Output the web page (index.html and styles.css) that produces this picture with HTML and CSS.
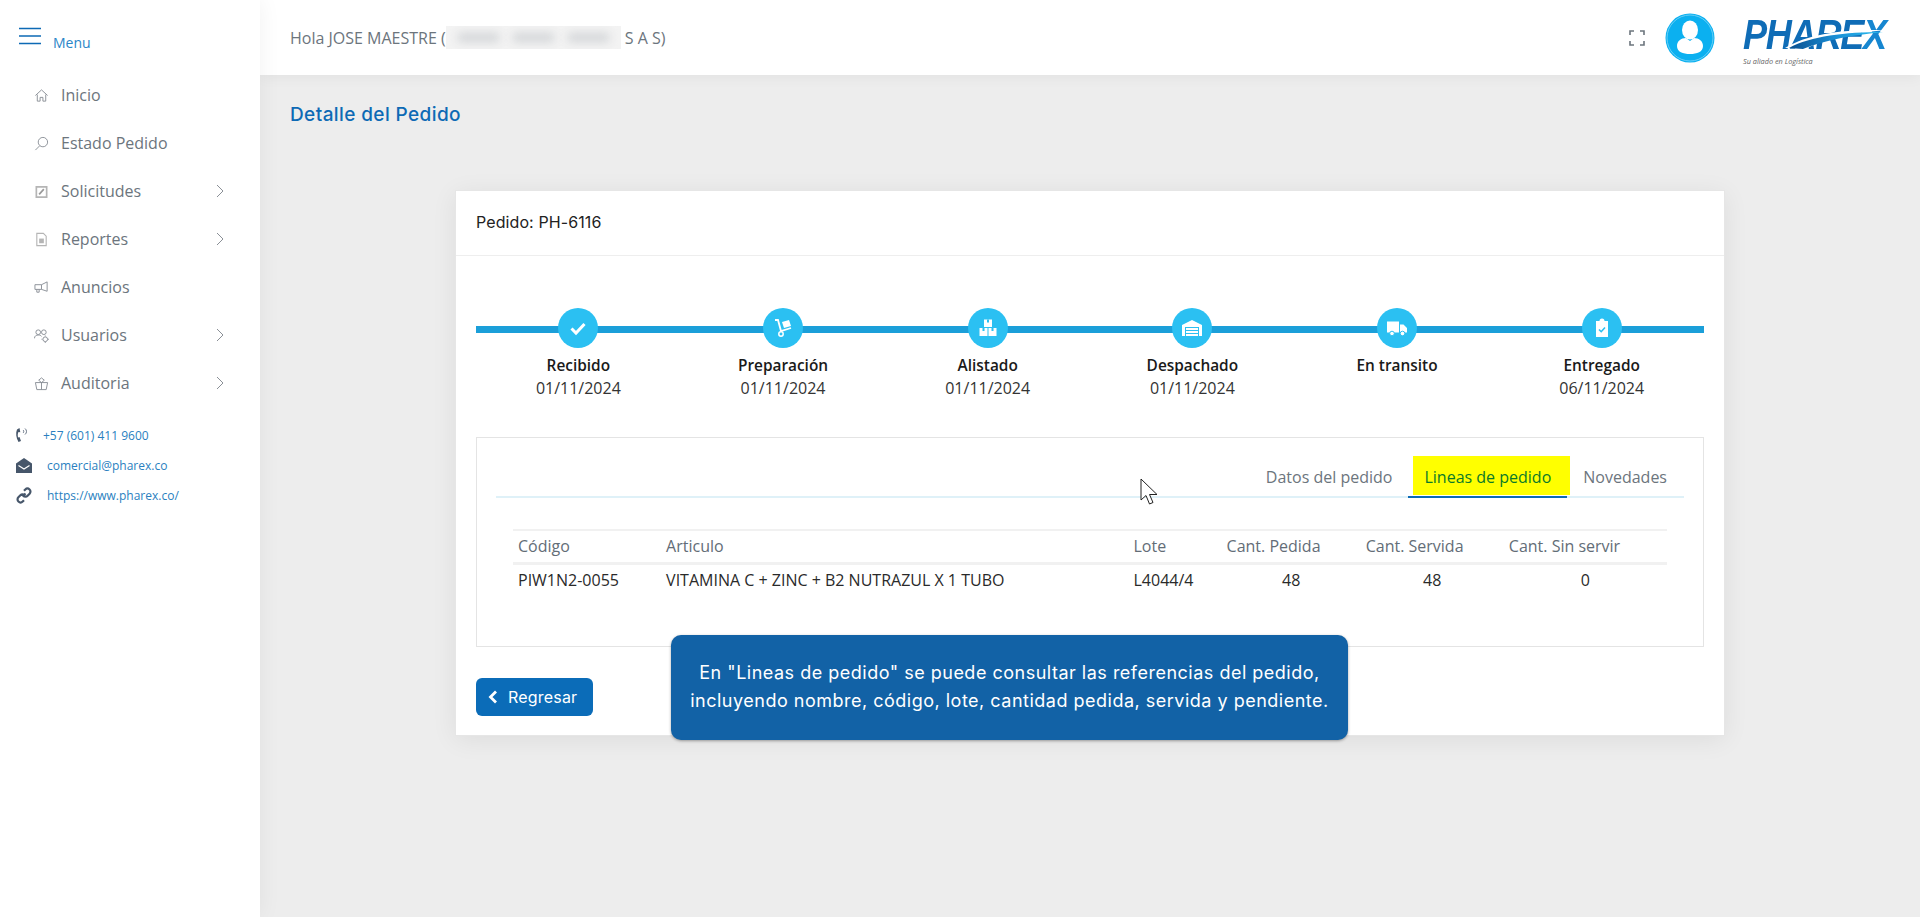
FILE: index.html
```html
<!DOCTYPE html>
<html>
<head>
  <meta charset="UTF-8">
  <title>Detalle del Pedido</title>
  <link rel="stylesheet" href="styles.css">
</head>
<body>
  <aside class="sidebar">
    <div class="menu-head">
      <svg class="burger" width="24" height="18" viewBox="0 0 24 18"><path d="M1 1.500h22M1 9h22M1 16.500h22" stroke="#0d6ab5" stroke-width="1.600" fill="none"/></svg>
      <span class="menu-label">Menu</span>
    </div>
    <nav class="nav">
      <a class="nav-item"><svg class="nav-icon" viewBox="0 0 16 16"><path d="M1.500 8 8 2l6.500 6M3.500 7v7h3v-4h3v4h3V7"/></svg><span>Inicio</span></a>
      <a class="nav-item"><svg class="nav-icon" viewBox="0 0 16 16"><circle cx="9.500" cy="6.500" r="5"/><path d="M6 10.500 1.500 15"/></svg><span>Estado Pedido</span></a>
      <a class="nav-item"><svg class="nav-icon" viewBox="0 0 16 16"><path class="soft" d="M2.500 3h11v11h-11z" stroke-width="1.800"/><path class="soft-dark" d="m5.500 11 5-5.500" stroke-width="1.800"/></svg><span>Solicitudes</span><svg class="chev" viewBox="0 0 8 14"><path d="m1 1 6 6-6 6"/></svg></a>
      <a class="nav-item"><svg class="nav-icon" viewBox="0 0 16 16"><path class="soft" d="M3 1.500h7l3 3v10H3z" stroke-width="1.200"/><path d="M5.500 7h5v5h-5z" fill="#b5b5b5" stroke="none"/></svg><span>Reportes</span><svg class="chev" viewBox="0 0 8 14"><path d="m1 1 6 6-6 6"/></svg></a>
      <a class="nav-item"><svg class="nav-icon" viewBox="0 0 16 16"><path d="M1 5h7l6-3v10L8 10H1zM3 10v3h2.500v-3M8 5v5"/></svg><span>Anuncios</span></a>
      <a class="nav-item"><svg class="nav-icon" viewBox="0 0 16 16"><circle cx="4.500" cy="4.500" r="2.500"/><circle cx="10.500" cy="4.500" r="2.500"/><path d="M.5 11c0-2.500 2-3.500 4-3.500s3 .5 3.500 1.500"/><circle cx="12" cy="12" r="2.500"/><path d="M12 8v1M12 15v1M8 12h1M15 12h1"/></svg><span>Usuarios</span><svg class="chev" viewBox="0 0 8 14"><path d="m1 1 6 6-6 6"/></svg></a>
      <a class="nav-item"><svg class="nav-icon" viewBox="0 0 16 16"><path d="M1.500 7h13l-1.500 7.500H3zM8 7v7.500"/><path d="M8 7 5 4.500 8 2l3 2.500z"/></svg><span>Auditoria</span><svg class="chev" viewBox="0 0 8 14"><path d="m1 1 6 6-6 6"/></svg></a>
    </nav>
    <ul class="contact">
      <li class="contact-phone"><svg width="14" height="16" viewBox="0 0 14 16"><path d="M4.500 1 2 2.500C.5 6 1 11 3.500 15l2.500-1-1.500-4-1.500.5C2.500 8 2.800 6 3.500 5l1.800.2z" fill="#46566a"/><path d="M8 3c1 .8 1 2.200 0 3M10 1.500c2 1.500 2 4.500 0 6" stroke="#46566a" stroke-width=".8" fill="none"/></svg><a>+57 (601) 411 9600</a></li>
      <li><svg width="18" height="17" viewBox="0 0 18 17"><path d="M1 6.500 9 1l8 5.500V16H1z" fill="#46566a"/><path d="m3.500 8.500 5.500 3.500 5.500-3.500" stroke="#fff" stroke-width="1.200" fill="none"/></svg><a>comercial@pharex.co</a></li>
      <li><svg width="18" height="17" viewBox="0 0 18 17"><path d="m7.500 9.500 3-3M9 3.800l1.300-1.300a3 3 0 0 1 4.300 4.200l-2 2a3 3 0 0 1-4.300 0M9 13.200l-1.300 1.300a3 3 0 0 1-4.300-4.200l2-2a3 3 0 0 1 4.300 0" stroke="#46566a" stroke-width="2.200" fill="none"/></svg><a>https://www.pharex.co/</a></li>
    </ul>
  </aside>

  <div class="page">
    <header class="topbar">
      <div class="greeting">Hola JOSE MAESTRE (<span class="blurred"><i></i><i></i><i></i></span> S A S)</div>
      <div class="top-right">
        <svg class="fullscreen" width="16" height="16" viewBox="0 0 16 16"><path d="M1 5V1h4M11 1h4v4M15 11v4h-4M5 15H1v-4" stroke="#6c757d" stroke-width="1.600" fill="none"/></svg>
        <svg class="avatar" width="50" height="50" viewBox="0 0 50 50"><circle cx="25" cy="25" r="24.500" fill="#0bb0f0"/><circle cx="25" cy="25" r="23" fill="none" stroke="#7fd6f7" stroke-width=".8"/><ellipse cx="25" cy="17" rx="8" ry="9.500" fill="#fff"/><path d="M12 33c0-5 4-8 9-8l4 3 4-3c5 0 9 3 9 8 0 6-6 8-13 8s-13-2-13-8z" fill="#fff"/></svg>
        <div class="logo">
          <span class="logo-name">PHARE<b>X</b></span>
          <svg class="logo-swoosh" width="146" height="30" viewBox="0 0 146 30">
            <defs><linearGradient id="swoosh" x1="0" x2="1" y1="0" y2="0"><stop offset="0" stop-color="#0a4f8f"/><stop offset=".5" stop-color="#1a8fd6"/><stop offset="1" stop-color="#2cc0f0"/></linearGradient></defs>
            <path d="M42 24C64 10 100 5 143 6 110 9 82 14 62 25z" fill="#fff"/>
            <path d="M46 24C68 12 102 8 140 8 110 11 82 16 60 25z" fill="url(#swoosh)"/>
          </svg>
          <span class="logo-tag">Su aliado en Logística</span>
        </div>
      </div>
    </header>

    <main class="content">
      <h1 class="page-title">Detalle del Pedido</h1>
      <section class="card">
        <div class="card-head">Pedido: PH-6116</div>
        <div class="card-body">
          <div class="steps">
            <div class="step">
              <div class="step-dot"><svg width="20" height="20" viewBox="0 0 20 20"><path d="m3.500 10.500 4.500 4.500 8.500-9" stroke="#fff" stroke-width="3" fill="none"/></svg></div>
              <div class="step-name">Recibido</div>
              <div class="step-date">01/11/2024</div>
            </div>
            <div class="step">
              <div class="step-dot"><svg width="20" height="20" viewBox="0 0 20 20"><path d="M2 2h3l3 11 10-3" stroke="#fff" stroke-width="1.800" fill="none"/><circle cx="8" cy="16" r="2.200" fill="none" stroke="#fff" stroke-width="1.500"/><path d="m9 4 7-2 2 6-7 2z" fill="#fff"/></svg></div>
              <div class="step-name">Preparación</div>
              <div class="step-date">01/11/2024</div>
            </div>
            <div class="step">
              <div class="step-dot"><svg width="20" height="20" viewBox="0 0 20 20"><path d="M6 1.500h8v7.500H6zM1.500 10H9.500v8h-8zM10.500 10h8v8h-8z" fill="#fff"/><path d="M9 1.500h2v3H9zM4.500 10h2v3h-2zM13.500 10h2v3h-2z" fill="#2bc0f2"/></svg></div>
              <div class="step-name">Alistado</div>
              <div class="step-date">01/11/2024</div>
            </div>
            <div class="step">
              <div class="step-dot"><svg width="20" height="20" viewBox="0 0 20 20"><path d="M0 7 10 2l10 5v11h-3V9H3v9H0z" fill="#fff"/><path d="M4 10h12v2H4zM4 13h12v2H4zM4 16h12v2H4z" fill="#fff"/></svg></div>
              <div class="step-name">Despachado</div>
              <div class="step-date">01/11/2024</div>
            </div>
            <div class="step">
              <div class="step-dot"><svg width="20" height="20" viewBox="0 0 20 20"><path d="M0 3.500h12v11H0zM13 6.500h3.500L20 10v4.500h-7z" fill="#fff"/><circle cx="5" cy="15.500" r="2.300" fill="#fff" stroke="#2bc0f2"/><circle cx="15.500" cy="15.500" r="2.300" fill="#fff" stroke="#2bc0f2"/></svg></div>
              <div class="step-name">En transito</div>
              <div class="step-date"></div>
            </div>
            <div class="step">
              <div class="step-dot"><svg width="20" height="20" viewBox="0 0 20 20"><path d="M4 3h3.500a2.500 2.500 0 0 1 5 0H16v16H4z" fill="#fff"/><path d="m7 11.500 2.200 2.200L13 9.500" stroke="#2bc0f2" stroke-width="1.600" fill="none"/></svg></div>
              <div class="step-name">Entregado</div>
              <div class="step-date">06/11/2024</div>
            </div>
          </div>

          <div class="panel">
            <div class="tabs">
              <a class="tab">Datos del pedido</a>
              <a class="tab tab-active"><span>Lineas de pedido</span></a>
              <a class="tab">Novedades</a>
            </div>
            <table class="lines">
              <thead>
                <tr>
                  <th class="col-code">Código</th>
                  <th class="col-name">Articulo</th>
                  <th class="col-lot">Lote</th>
                  <th class="col-a">Cant. Pedida</th>
                  <th class="col-b">Cant. Servida</th>
                  <th class="col-c">Cant. Sin servir</th>
                </tr>
              </thead>
              <tbody>
                <tr>
                  <td>PIW1N2-0055</td>
                  <td>VITAMINA C + ZINC + B2 NUTRAZUL X 1 TUBO</td>
                  <td>L4044/4</td>
                  <td class="num">48</td>
                  <td class="num">48</td>
                  <td class="num num-last">0</td>
                </tr>
              </tbody>
            </table>
          </div>

          <button class="back-btn"><svg width="10" height="14" viewBox="0 0 10 14"><path d="M8 1.500 2.500 7 8 12.500" stroke="#fff" stroke-width="2.800" fill="none"/></svg>Regresar</button>
        </div>
      </section>
    </main>
  </div>

  <svg class="cursor" width="19" height="28" viewBox="0 0 19 28"><path d="M1 1v21l5-4.500 3.500 8.500 3.500-1.500L9.500 16.500H17z" fill="#fff" stroke="#222" stroke-width="1"/></svg>
  <div class="callout">En "Lineas de pedido" se puede consultar las referencias del pedido,<br>incluyendo nombre, código, lote, cantidad pedida, servida y pendiente.</div>
</body>
</html>
```

FILE: styles.css
```css
html, body {
  height: 100%;
}
body {
  margin: 0;
  display: flex;
  height: 917px;
  overflow: hidden;
  background-color: #ededed;
  font-family: 'Open Sans', sans-serif;
  font-size: 16px;
  color: #212529;
}
a {
  text-decoration: none;
}

/* sidebar */
.sidebar {
  position: relative;
  z-index: 2;
  flex: 0 0 260px;
  background-color: #fff;
  box-shadow: 0 0 22px rgba(0, 0, 0, 0.06);
}
.menu-head {
  display: flex;
  padding: 27px 0 0 18px;
  height: 44px;
}
.menu-label {
  margin: 6px 0 0 11px;
  font-size: 14px;
  color: #2a86c8;
}
.nav {
  display: flex;
  flex-direction: column;
}
.nav-item {
  display: flex;
  align-items: center;
  height: 48px;
  padding: 0 36px 0 34px;
  color: #6c757d;
}
.nav-icon {
  flex: 0 0 15px;
  width: 15px;
  height: 15px;
  margin-right: 12px;
  fill: none;
  stroke: #8a8f96;
  stroke-width: 1;
}
.nav-icon .soft {
  stroke: #b5b5b5;
}
.nav-icon .soft-dark {
  stroke: #999;
}
.nav-item span {
  flex: 1;
}
.chev {
  width: 8px;
  height: 14px;
  fill: none;
  stroke: #8a8f96;
  stroke-width: 1;
}
.contact {
  list-style: none;
  margin: 0;
  padding: 13px 0 0 15px;
  font-size: 12px;
}
.contact li {
  display: flex;
  align-items: center;
  height: 30px;
}
.contact svg {
  flex: 0 0 18px;
  margin-right: 14px;
}
.contact a {
  color: #2a7fc0;
}
.contact .contact-phone svg {
  flex: 0 0 14px;
  margin-right: 14px;
}

/* top bar */
.page {
  flex: 1;
  display: flex;
  flex-direction: column;
  min-width: 0;
}
.topbar {
  position: relative;
  z-index: 1;
  display: flex;
  align-items: center;
  justify-content: space-between;
  height: 75px;
  padding: 0 31px 0 30px;
  background-color: #fff;
  box-shadow: 0 2px 14px rgba(0, 0, 0, 0.05);
  color: #6c757d;
}
.greeting {
  display: flex;
  align-items: center;
  white-space: pre;
}
.blurred {
  display: flex;
  align-items: center;
  gap: 14px;
  width: 175px;
  height: 23px;
  padding: 0 12px;
  box-sizing: border-box;
  background-color: #f3f3f3;
  overflow: hidden;
}
.blurred i {
  flex: 1;
  height: 9px;
  background-color: #d2d4d7;
  filter: blur(5px);
}
.top-right {
  display: flex;
  align-items: center;
}
.fullscreen {
  margin-right: 20px;
}
.avatar {
  margin-right: 28px;
}
.logo {
  position: relative;
  width: 146px;
  height: 48px;
  margin-top: 6px;
}
.logo-name {
  display: block;
  font-family: 'Liberation Sans', sans-serif;
  font-size: 42px;
  line-height: 36px;
  font-weight: 700;
  font-style: italic;
  letter-spacing: -1.5px;
  color: #0f6cb6;
  white-space: nowrap;
  transform: scaleX(0.86);
  transform-origin: left center;
}
.logo-name b {
  color: #1686d0;
}
.logo-swoosh {
  position: absolute;
  left: 0;
  top: 7px;
}
.logo-tag {
  display: block;
  margin-top: 3px;
  font-size: 7.300px;
  line-height: 10px;
  font-style: italic;
  color: #666;
}

/* content */
.content {
  flex: 1;
  padding: 0 30px;
}
.page-title {
  margin: 28px 0 0;
  font-family: 'Inter', sans-serif;
  font-size: 19px;
  line-height: 24px;
  font-weight: 500;
  letter-spacing: 0.4px;
  color: #0d6ab5;
}
.card {
  width: 1270px;
  margin: 63px 0 0 165px;
  background-color: #fff;
  box-shadow: 0 4px 24px rgba(0, 0, 0, 0.07);
  border: 1px solid #e6e6e6;
  box-sizing: border-box;
}
.card-head {
  height: 64px;
  padding-left: 20px;
  line-height: 62px;
  font-family: 'Inter', sans-serif;
  font-size: 16px;
  letter-spacing: 0.1px;
  color: #222;
  border-bottom: 1px solid #eee;
}
.card-body {
  padding: 52px 20px 19px;
}

/* order progress */
.steps {
  position: relative;
  display: flex;
  margin-bottom: 38px;
}
.steps::before {
  content: "";
  position: absolute;
  left: 0;
  right: 0;
  top: 18px;
  height: 7px;
  background-color: #1b9fd9;
}
.step {
  position: relative;
  flex: 1;
  display: flex;
  flex-direction: column;
  align-items: center;
}
.step-dot {
  display: flex;
  align-items: center;
  justify-content: center;
  width: 40px;
  height: 40px;
  margin-bottom: 7px;
  border-radius: 50%;
  background-color: #2bc0f2;
}
.step-name {
  height: 22px;
  line-height: 22px;
  font-size: 15.400px;
  font-weight: 600;
  color: #1a1a1a;
}
.step-date {
  height: 22px;
  line-height: 22px;
  color: #333;
}

/* tabs and table */
.panel {
  height: 210px;
  box-sizing: border-box;
  padding: 18px 19px 0;
  border: 1px solid #e4e4e4;
}
.tabs {
  display: flex;
  justify-content: flex-end;
  height: 40px;
  padding-right: 1px;
  border-bottom: 2px solid #dff1f8;
}
.tab {
  display: block;
  height: 42px;
  line-height: 42px;
  padding: 0 16px;
  color: #6c757d;
}
.tab-active {
  position: relative;
  border-bottom: 2px solid #0d6ab5;
  color: #0a7a2a;
  box-sizing: border-box;
  line-height: 42px;
}
.tab-active span {
  position: relative;
}
.tab-active::before {
  content: "";
  position: absolute;
  left: 5px;
  right: -3px;
  top: 0;
  height: 39px;
  background-color: #ffff00;
}
.lines {
  width: 1154px;
  margin: 31px 0 0 17px;
  border-collapse: collapse;
  table-layout: fixed;
}
.lines th {
  height: 29px;
  padding: 0 12px 2px;
  text-align: left;
  font-weight: 500;
  color: #636d77;
  border-top: 2px solid #f1f1f1;
  border-bottom: 3px solid #f1f1f1;
  white-space: nowrap;
}
.lines td {
  height: 30px;
  padding: 0 12px 2px;
  color: #2a2a2a;
  white-space: nowrap;
}
.lines th:first-child,
.lines td:first-child {
  padding-left: 5px;
}
.lines td.num {
  text-align: center;
  padding-left: 26px;
}
.lines td.num-last {
  padding-left: 19px;
}
.col-code { width: 124px; }
.col-name { width: 443px; }
.col-lot { width: 69px; }
.col-a { width: 115px; }
.col-b { width: 119px; }
.col-c { width: 146px; }

.back-btn {
  display: flex;
  align-items: center;
  gap: 10px;
  width: 117px;
  height: 38px;
  margin-top: 31px;
  padding: 0 0 0 12px;
  border: none;
  border-radius: 6px;
  background-color: #0b6cb8;
  color: #fff;
  font-family: 'Inter', sans-serif;
  font-size: 16px;
  letter-spacing: 0.2px;
}

/* overlays */
.cursor {
  position: absolute;
  left: 1140px;
  top: 478px;
  z-index: 4;
}
.callout {
  position: absolute;
  z-index: 5;
  left: 671px;
  top: 635px;
  width: 677px;
  height: 105px;
  box-sizing: border-box;
  padding-top: 24px;
  border-radius: 10px;
  background-color: #1262a6;
  box-shadow: 0 1px 3px rgba(0, 0, 0, 0.35);
  color: #fff;
  font-family: 'Inter', sans-serif;
  font-size: 18px;
  line-height: 28px;
  letter-spacing: 0.5px;
  text-align: center;
}
```
